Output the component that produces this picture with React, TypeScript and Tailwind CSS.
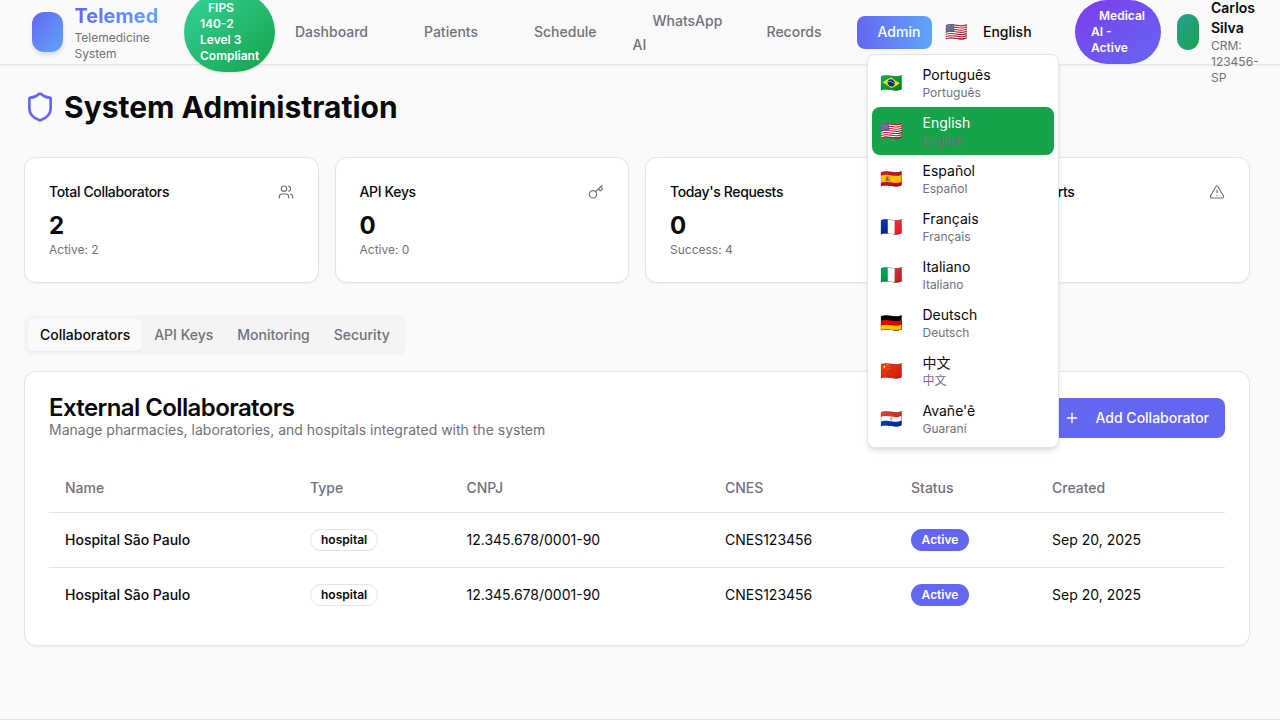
import { Shield, Users, Key, TriangleAlert, Plus } from "lucide-react";

const languages = [
  { flag: "🇧🇷", name: "Português", sub: "Português" },
  { flag: "🇺🇸", name: "English", sub: "English", active: true },
  { flag: "🇪🇸", name: "Español", sub: "Español" },
  { flag: "🇫🇷", name: "Français", sub: "Français" },
  { flag: "🇮🇹", name: "Italiano", sub: "Italiano" },
  { flag: "🇩🇪", name: "Deutsch", sub: "Deutsch" },
  { flag: "🇨🇳", name: "中文", sub: "中文" },
  { flag: "🇵🇾", name: "Avañe'ẽ", sub: "Guaraní" },
];

const stats = [
  { title: "Total Collaborators", value: "2", sub: "Active: 2", icon: Users },
  { title: "API Keys", value: "0", sub: "Active: 0", icon: Key },
  { title: "Today's Requests", value: "0", sub: "Success: 4", icon: Users },
  { title: "Security Alerts", value: "0", sub: "Resolved: 0", icon: TriangleAlert },
];

const heads = ["Name", "Type", "CNPJ", "CNES", "Status", "Created"];

function Row({ last }: { last?: boolean }) {
  return (
    <tr className={last ? "h-[55px]" : "h-[55px] border-b border-[#e4e4e7]"}>
      <td className="px-4 font-medium">Hospital São Paulo</td>
      <td className="px-4">
        <span className="inline-flex h-[22px] items-center rounded-full border border-[#e4e4e7] px-[10px] text-xs font-semibold">hospital</span>
      </td>
      <td className="px-4">12.345.678/0001-90</td>
      <td className="px-4">CNES123456</td>
      <td className="px-4">
        <span className="inline-flex h-[22px] w-[58px] items-center justify-center rounded-full bg-[#6366f1] text-xs font-semibold text-white">Active</span>
      </td>
      <td className="px-4">Sep 20, 2025</td>
    </tr>
  );
}

export default function App() {
  return (
    <div className="flex h-[720px] flex-col overflow-hidden bg-[#fafafa] font-['Inter','Noto_Sans_CJK_SC',sans-serif] text-[#09090b]">
      <header className="relative z-10 flex h-[65px] shrink-0 items-center border-b border-[#e4e4e7] bg-[#fafafa] pl-8 shadow-xs">
        <div className="h-10 w-[31px] shrink-0 rounded-xl bg-gradient-to-br from-[#6366f1] to-[#60a5fa] shadow-md" />
        <div className="ml-3 w-[109px] shrink-0 -translate-x-[0.5px]">
          <div className="w-[84px] bg-gradient-to-r from-[#6366f1] to-[#60a5fa] bg-clip-text text-xl leading-[28px] font-bold text-transparent">Telemed</div>
          <div className="w-[90px] text-xs leading-4 text-[#71717a]">Telemedicine System</div>
        </div>
        <div className="h-20 w-[91px] shrink-0 rounded-full bg-gradient-to-br from-[#34d399] to-[#16a34a] py-2 pr-3 pl-4 indent-2 text-xs leading-4 font-semibold text-white shadow-sm">
          FIPS 140-2 Level 3 Compliant
        </div>
        <nav className="flex shrink-0 items-center text-sm font-medium text-[#71717a]">
          <div className="w-[128px] pl-5">Dashboard</div>
          <div className="w-[110px] pl-[21px]">Patients</div>
          <div className="w-[107.5px] pl-[21px]">Schedule</div>
          <div className="mt-0.5 w-[125.5px] pr-3 pl-3 indent-5 leading-6">WhatsApp AI</div>
          <div className="w-[111px] pl-[20.5px]">Records</div>
          <div className="flex h-[33px] w-[75px] items-center rounded-lg bg-gradient-to-r from-[#6366f1] to-[#60a5fa] pl-[20.5px] text-white">Admin</div>
        </nav>
        <div className="ml-[13px] w-[21px] shrink-0 text-lg leading-7">🇺🇸</div>
        <div className="ml-[17px] w-[92px] shrink-0 text-sm font-medium">English</div>
        <div className="h-16 w-[86px] shrink-0 rounded-full bg-gradient-to-br from-[#7c3aed] to-[#6366f1] py-2 pr-3 pl-4 indent-2 text-xs leading-4 font-semibold text-white">
          Medical AI - Active
        </div>
        <div className="ml-4 h-9 w-[22px] shrink-0 rounded-full bg-gradient-to-br from-[#2a9d8f] to-[#16a34a]" />
        <div className="ml-3 w-[52px] shrink-0 pt-[19px]">
          <div className="text-sm leading-5 font-semibold">Carlos Silva</div>
          <div className="text-xs leading-4 text-[#71717a]">CRM: 123456-SP</div>
        </div>

        <div className="absolute top-[54px] left-[867px] z-20 w-[192px] rounded-lg border border-[#e4e4e7] bg-white p-1 shadow-md">
          {languages.map((l) => (
            <div key={l.name} className={l.active ? "flex h-12 items-center gap-[20.5px] rounded-lg bg-[#16a34a] px-2" : "flex h-12 items-center gap-[20.5px] px-2"}>
              <span className="w-[22px] text-lg leading-7">{l.flag}</span>
              <div className="pt-0.5">
                <div className={l.active ? "text-sm leading-[18px] text-white" : "text-sm leading-[18px]"}>{l.name}</div>
                <div className="text-xs leading-[18px] text-[#71717a]">{l.sub}</div>
              </div>
            </div>
          ))}
        </div>
      </header>

      <main className="h-[654px] w-[1274px] shrink-0 px-6 pt-6">
        <div className="mb-8 flex h-9 items-center gap-2">
          <Shield className="h-8 w-8 text-[#6366f1]" strokeWidth={2} />
          <h1 className="text-3xl leading-9 font-bold">System Administration</h1>
        </div>

        <div className="mb-8 grid h-[126px] grid-cols-4 gap-4">
          {stats.map((s) => {
            const Icon = s.icon;
            return (
              <div key={s.title} className="rounded-xl border border-[#e4e4e7] bg-white px-6 pt-6 shadow-xs">
                <div className="flex h-5 items-center justify-between">
                  <span className="text-sm font-medium tracking-tight">{s.title}</span>
                  <Icon className="h-4 w-4 text-[#71717a]" strokeWidth={1.75} />
                </div>
                <div className="mt-2 text-2xl leading-8 font-bold">{s.value}</div>
                <div className="text-xs leading-4 text-[#71717a]">{s.sub}</div>
              </div>
            );
          })}
        </div>

        <div className="flex h-10 w-[382px] items-center rounded-lg bg-[#f4f4f5] p-1 text-sm font-medium text-[#71717a]">
          <div className="flex h-8 items-center rounded-md bg-[#fafafa] px-3 text-[#09090b] shadow-xs">Collaborators</div>
          <div className="flex h-8 items-center px-3">API Keys</div>
          <div className="flex h-8 items-center px-3">Monitoring</div>
          <div className="flex h-8 items-center px-3">Security</div>
        </div>

        <section className="mt-4 h-[275px] rounded-xl border border-[#e4e4e7] bg-white px-6 pt-6 shadow-xs">
          <div className="mb-6 flex h-11 items-center justify-between">
            <div>
              <h2 className="text-2xl leading-6 font-semibold tracking-tight">External Collaborators</h2>
              <p className="text-sm leading-5 text-[#71717a]">Manage pharmacies, laboratories, and hospitals integrated with the system</p>
            </div>
            <button className="flex h-10 w-[177px] items-center rounded-lg bg-[#6366f1] pl-4 text-sm font-medium text-white">
              <Plus className="mr-[15.5px] h-4 w-4" />
              Add Collaborator
            </button>
          </div>
          <table className="w-full table-fixed text-left text-sm">
            <colgroup>
              <col className="w-[245px]" />
              <col className="w-[156.5px]" />
              <col className="w-[258.5px]" />
              <col className="w-[186px]" />
              <col className="w-[141px]" />
              <col />
            </colgroup>
            <thead>
              <tr className="h-[48px] border-b border-[#e4e4e7]">
                {heads.map((h) => (
                  <th key={h} className="px-4 font-medium text-[#71717a]">{h}</th>
                ))}
              </tr>
            </thead>
            <tbody>
              <Row />
              <Row last />
            </tbody>
          </table>
        </section>
      </main>
      <footer className="h-px shrink-0 bg-[#e4e4e7]" />
    </div>
  );
}
